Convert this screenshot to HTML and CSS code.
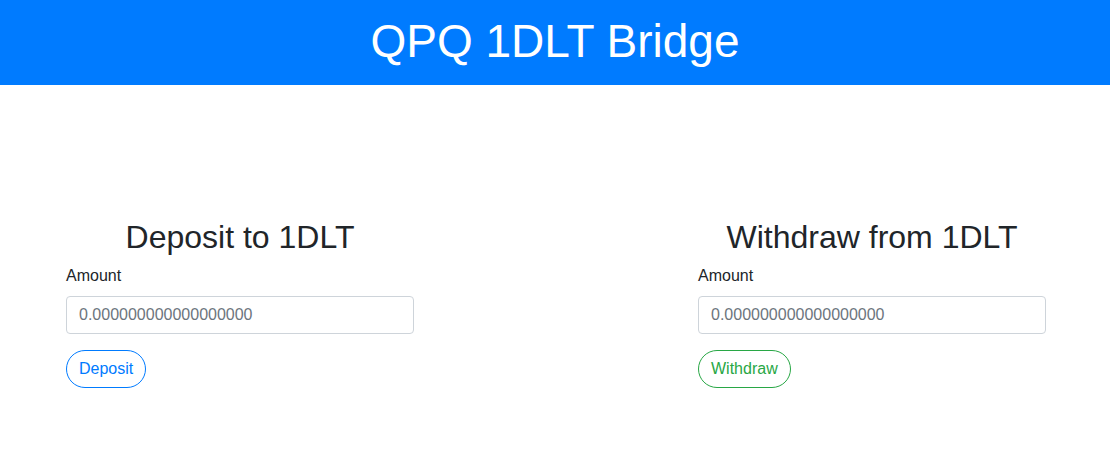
FILE: index.html
```html
<!DOCTYPE html>
<html>
<head>
    <meta charset="UTF-8">
    <meta name="viewport" content="width=device-width, initial-scale=1" />
    <title>QPQ 1DLT Bridge</title>
    <link rel="stylesheet" href="styles.css">
</head>
<body>

<div class="header">
    <h1>QPQ 1DLT Bridge</h1>
</div>

<div class="panels">
    <div class="panel">
        <h2>Deposit to 1DLT</h2>
        <form>
            <div class="form-group">
                <label for="depositAmount">Amount</label>
                <input id="depositAmount" class="form-control" type="text" placeholder="0.000000000000000000" />
            </div>
            <button type="button" class="btn btn-primary">Deposit</button>
        </form>
    </div>
    <div class="panel">
        <h2>Withdraw from 1DLT</h2>
        <form>
            <div class="form-group">
                <label for="withdrawAmount">Amount</label>
                <input id="withdrawAmount" class="form-control" type="text" placeholder="0.000000000000000000" />
            </div>
            <button type="button" class="btn btn-success">Withdraw</button>
        </form>
    </div>
</div>

</body>
</html>
```

FILE: styles.css
```css
html {
    font-family: "Liberation Sans", Arial, sans-serif;
}

body {
    margin: 0;
    color: #212529;
    font-size: 16px;
    line-height: 1.5;
}

.header {
    background-color: #007bff;
    color: #fff;
    height: 85px;
    padding-top: 14px;
    box-sizing: border-box;
    text-align: center;
}

.header h1 {
    margin: 0;
    font-size: 46px;
    font-weight: normal;
    line-height: 1.2;
}

.panels {
    display: flex;
    justify-content: space-between;
    padding: 133px 64px 0 66px;
}

.panel {
    width: 348px;
}

.panel h2 {
    margin: 0 0 8px;
    font-size: 32px;
    font-weight: normal;
    line-height: 1.2;
    text-align: center;
}

.form-group {
    margin-bottom: 16px;
}

label {
    display: block;
    margin-bottom: 8px;
}

.form-control {
    display: block;
    width: 100%;
    height: 38px;
    box-sizing: border-box;
    padding: 6px 12px;
    font-family: inherit;
    font-size: 16px;
    color: #495057;
    border: 1px solid #ced4da;
    border-radius: 4px;
    background: #fff;
}

.form-control::placeholder {
    color: #6c757d;
}

.btn {
    height: 38px;
    padding: 6px 12px;
    font-family: inherit;
    font-size: 16px;
    line-height: 24px;
    background: #fff;
    border: 1px solid;
    border-radius: 20px;
    box-sizing: border-box;
}

.btn-primary {
    color: #007bff;
    border-color: #007bff;
}

.btn-success {
    color: #28a745;
    border-color: #28a745;
}
```
